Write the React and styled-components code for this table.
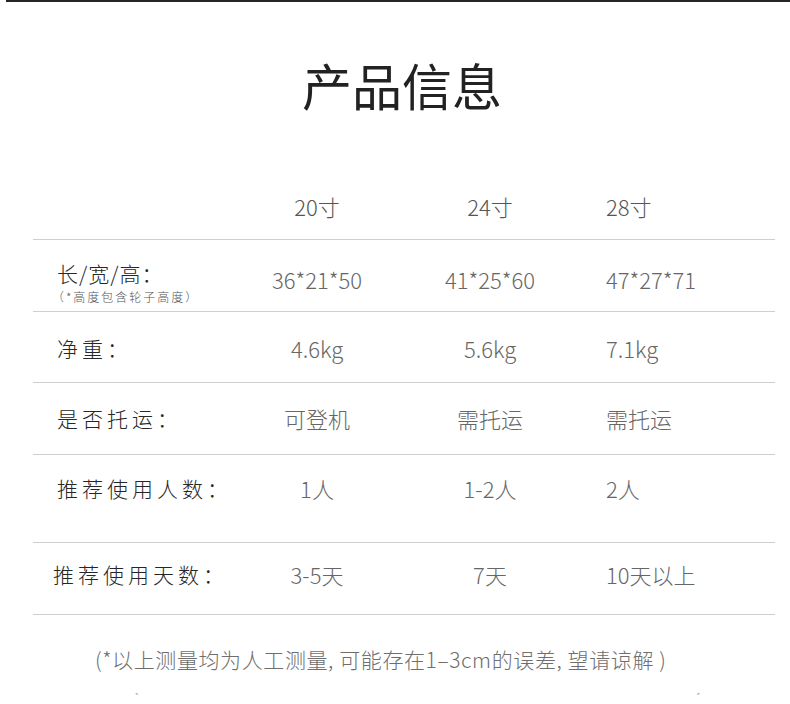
import React from "react";
import styled, { createGlobalStyle } from "styled-components";

const sizes = ["20寸", "24寸", "28寸"];

const rows = [
  {
    label: "长/宽/高：",
    sub: "（*高度包含轮子高度）",
    values: ["36*21*50", "41*25*60", "47*27*71"],
    height: 72,
    pad: 21,
    shift: 6,
    tight: true,
  },
  { label: "净重：", values: ["4.6kg", "5.6kg", "7.1kg"], height: 71, pad: 24 },
  { label: "是否托运：", values: ["可登机", "需托运", "需托运"], height: 72, pad: 23 },
  { label: "推荐使用人数：", values: ["1人", "1-2人", "2人"], height: 88, pad: 21 },
  {
    label: "推荐使用天数：",
    values: ["3-5天", "7天", "10天以上"],
    height: 72,
    pad: 19,
    indent: 20,
  },
];

function App() {
  return (
    <Page>
      <GlobalStyle />
      <TopRule />
      <Title>产品信息</Title>
      <Table>
        <Row height={132} pad={86}>
          <span />
          {sizes.map((s, i) => (
            <Value key={s} col={i} dark>
              {s}
            </Value>
          ))}
        </Row>
        {rows.map((row) => (
          <Row key={row.label} height={row.height} pad={row.pad}>
            <LabelCell indent={row.indent}>
              <Label tight={row.tight}>{row.label}</Label>
              {row.sub && <SubLabel>{row.sub}</SubLabel>}
            </LabelCell>
            {row.values.map((v, i) => (
              <Value key={i} col={i} shift={row.shift}>
                {v}
              </Value>
            ))}
          </Row>
        ))}
      </Table>
      <Note>(*以上测量均为人工测量, 可能存在1–3cm的误差, 望请谅解 )</Note>
      <Marks>
        <Mark>ˎ</Mark>
        <Mark>ˏ</Mark>
      </Marks>
    </Page>
  );
}

const GlobalStyle = createGlobalStyle`
  body {
    margin: 0;
    background: #fff;
    font-family: "Noto Sans CJK SC", "Noto Sans", sans-serif;
  }
`;

const Page = styled.div`
  width: 790px;
  height: 704px;
  overflow: hidden;
  background: #fff;
`;

const TopRule = styled.div`
  height: 2px;
  margin-left: 6px;
  background: #262626;
`;

const Title = styled.h1`
  margin: 58px 0 0;
  padding-left: 14px;
  font-size: 50px;
  line-height: 48px;
  font-weight: 400;
  color: #222;
  text-align: center;
`;

const Table = styled.div`
  margin-left: 33px;
  width: 742px;
`;

const Row = styled.div`
  display: grid;
  grid-template-columns: 197px 174px 172px 1fr;
  align-items: start;
  box-sizing: border-box;
  height: ${(p) => p.height}px;
  padding-top: ${(p) => p.pad}px;
  border-bottom: 1px solid #cfcfcf;
`;

const LabelCell = styled.div`
  display: flex;
  flex-direction: column;
  padding-left: ${(p) => (p.indent ? p.indent : 24)}px;
`;

const Label = styled.div`
  font-size: 21px;
  line-height: 24px;
  font-weight: 300;
  letter-spacing: ${(p) => (p.tight ? 1 : 4)}px;
  color: #262626;
  white-space: nowrap;
`;

const SubLabel = styled.div`
  margin-top: 5px;
  margin-left: -5px;
  font-size: 12px;
  line-height: 14px;
  font-weight: 300;
  letter-spacing: 2px;
  color: #555;
  white-space: nowrap;
`;

const Value = styled.div`
  font-size: 22px;
  line-height: 24px;
  font-weight: 300;
  color: ${(p) => (p.dark ? "#555" : "#666")};
  white-space: nowrap;
  margin-top: ${(p) => p.shift || 0}px;
  text-align: ${(p) => (p.col === 2 ? "left" : "center")};
  padding-left: ${(p) => (p.col === 2 ? 30 : 0)}px;
`;

const Note = styled.p`
  margin: 32px 0 0 95px;
  font-size: 21px;
  line-height: 24px;
  font-weight: 300;
  letter-spacing: 0.6px;
  color: #6e6e6e;
  white-space: nowrap;
`;

const Marks = styled.div`
  display: flex;
  justify-content: space-between;
  padding: 10px 90px 0 135px;
`;

const Mark = styled.span`
  font-size: 12px;
  line-height: 12px;
  color: #9a9a9a;
`;

export default App;
